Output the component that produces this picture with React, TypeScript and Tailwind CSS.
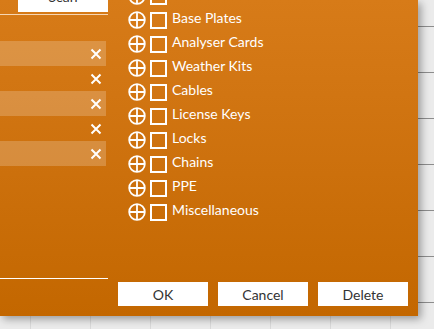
import React from 'react';

const categories = [
  'Sensors',
  'Base Plates',
  'Analyser Cards',
  'Weather Kits',
  'Cables',
  'License Keys',
  'Locks',
  'Chains',
  'PPE',
  'Miscellaneous',
];

const scannedRows = [true, false, true, false, true];

const RemoveIcon = () => (
  <svg width="12" height="12" viewBox="0 0 12 12" className="text-white">
    <path d="M1.5 1.5 L10.5 10.5 M10.5 1.5 L1.5 10.5" stroke="currentColor" strokeWidth="2" fill="none" />
  </svg>
);

const AddIcon = () => (
  <svg width="18" height="18" viewBox="0 0 18 18" className="shrink-0 text-white">
    <circle cx="9" cy="9" r="7.8" stroke="currentColor" strokeWidth="1.8" fill="none" />
    <path d="M9 1.2 V16.8 M1.2 9 H16.8" stroke="currentColor" strokeWidth="1.8" />
  </svg>
);

const CategoryRow = ({ label }: { label: string }) => (
  <div className="flex h-6 items-center">
    <AddIcon />
    <span className="ml-[4px] h-[17px] w-[17px] shrink-0 border-2 border-white" />
    <span className="ml-[5px] -mt-[5px] text-[14px] leading-5 text-white">{label}</span>
  </div>
);

export default function App() {
  return (
    <div className="relative h-[329px] w-[434px] overflow-hidden bg-[#ebebeb] bg-[linear-gradient(to_bottom,transparent_26px,#8c8c8c_26px,#8c8c8c_27px,transparent_27px),linear-gradient(to_right,transparent_30px,#d9d9d9_30px,#d9d9d9_31px,transparent_31px)] bg-[length:100%_46px,60px_100%] [font-family:Lato,'Open_Sans',sans-serif]">
      <div className="flex h-[316px] w-[418px] bg-gradient-to-b from-[#d77b18] to-[#c36700] shadow-[3px_3px_8px_rgba(0,0,0,0.35)]">
        {/* left column: scan + scanned items */}
        <div className="flex w-[108px] shrink-0 flex-col">
          <div className="ml-[18px] flex h-[12px] w-[90px] justify-center overflow-hidden bg-white">
            <span className="-mt-[13px] text-[14px] leading-5 text-[#333]">Scan</span>
          </div>
          <div className="mt-[2px] h-px w-[108px] bg-[#f6d6b4]" />
          <div className="mt-[26px] flex w-[106px] flex-col">
            {scannedRows.map((band, i) => (
              <div
                key={i}
                className={`flex h-[25px] items-center justify-end pr-[4px] ${band ? 'bg-white/20' : ''}`}
              >
                <RemoveIcon />
              </div>
            ))}
          </div>
          <div className="mt-auto mb-[37px] h-px w-[108px] bg-white" />
        </div>

        {/* right column: categories + dialog buttons */}
        <div className="flex flex-1 flex-col">
          <div className="-mt-[16px] ml-[20px] flex flex-col">
            {categories.map((c) => (
              <CategoryRow key={c} label={c} />
            ))}
          </div>
          <div className="mt-auto mb-[10px] ml-[10px] flex gap-[10px]">
            {['OK', 'Cancel', 'Delete'].map((b) => (
              <button
                key={b}
                type="button"
                className="flex h-[24px] w-[90px] items-center justify-center bg-white text-[14px] text-[#333]"
              >
                {b}
              </button>
            ))}
          </div>
        </div>
      </div>
    </div>
  );
}
